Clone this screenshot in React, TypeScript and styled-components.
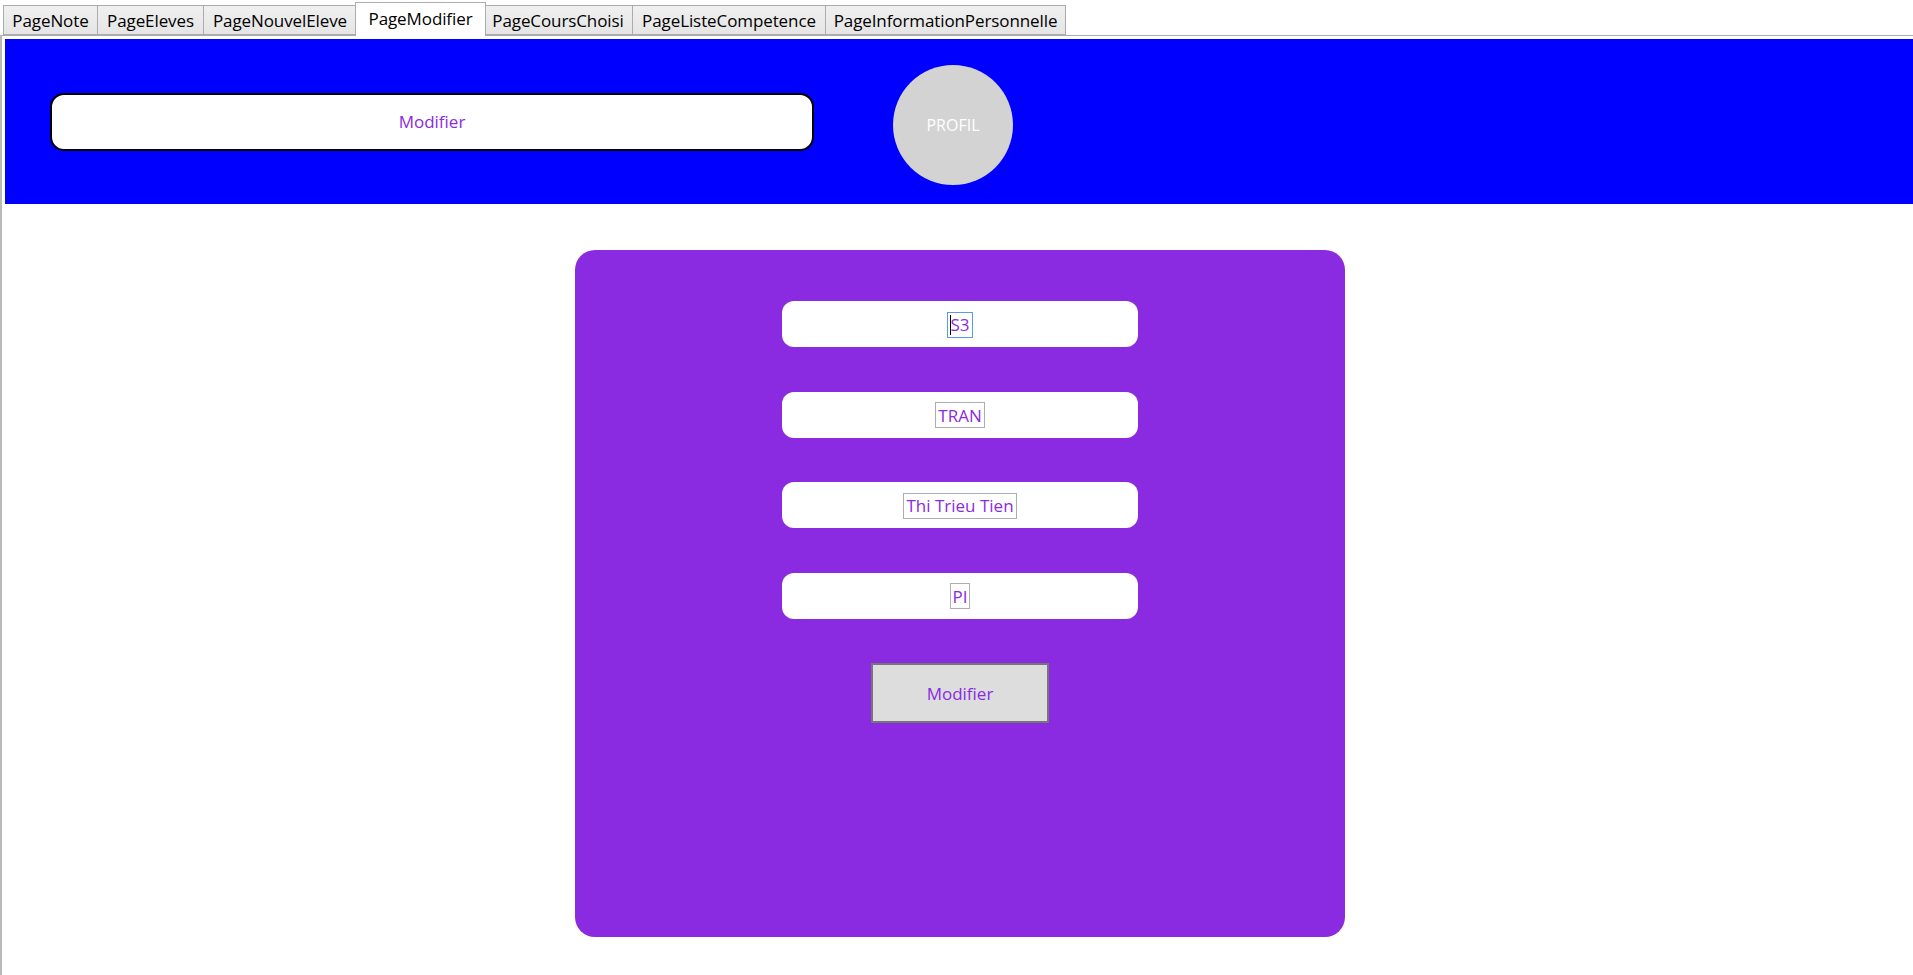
import React from "react";
import styled, { createGlobalStyle } from "styled-components";

const Global = createGlobalStyle`
  html, body { margin: 0; padding: 0; background: #ffffff; }
  body { font-family: "Open Sans", "Noto Sans", sans-serif; }
  #root { min-height: 975px; }
`;

const Page = styled.div`
  display: flex;
  flex-direction: column;
  height: 975px;
  overflow: hidden;
`;

const TabStrip = styled.div`
  display: flex;
  align-items: flex-end;
  height: 35px;
  padding-left: 3px;
  box-sizing: border-box;
  position: relative;
  z-index: 1;
`;

const Tab = styled.div<{ $w: number; $active?: boolean }>`
  width: ${(p) => p.$w}px;
  box-sizing: border-box;
  height: ${(p) => (p.$active ? 34 : 30)}px;
  margin-left: ${(p) => (p.$active ? -2 : 0)}px;
  margin-right: ${(p) => (p.$active ? -2 : 0)}px;
  margin-bottom: ${(p) => (p.$active ? -1 : 0)}px;
  display: flex;
  align-items: center;
  justify-content: center;
  border: 1px solid #acacac;
  border-bottom: ${(p) => (p.$active ? "none" : "1px solid #acacac")};
  border-left-width: ${(p) => (p.$active ? 1 : 0)}px;
  &:first-child { border-left-width: 1px; }
  background: ${(p) => (p.$active ? "#ffffff" : "linear-gradient(#f0f0f0, #e5e5e5)")};
  color: #000000;
  font-size: 17px;
  letter-spacing: -0.1px;
  padding-bottom: ${(p) => (p.$active ? 3 : 0)}px;
  white-space: nowrap;
  position: relative;
  z-index: ${(p) => (p.$active ? 2 : 1)};
`;

const Frame = styled.div`
  flex: 1;
  border-top: 1px solid #acacac;
  border-left: 2px solid #b9b9b9;
  padding: 3px 0 0 3px;
  display: flex;
  flex-direction: column;
`;

const Header = styled.div`
  height: 165px;
  background: #0000ff;
  display: flex;
  align-items: center;
  padding-left: 45px;
  gap: 79px;
`;

const HeaderField = styled.div`
  width: 764px;
  height: 58px;
  box-sizing: border-box;
  background: #ffffff;
  border: 2px solid #000000;
  border-radius: 14px;
  display: flex;
  align-items: center;
  justify-content: center;
  color: #8a2be2;
  font-size: 17px;
`;

const ProfileCircle = styled.div`
  width: 120px;
  height: 120px;
  border-radius: 50%;
  background: #d3d3d3;
  color: #ffffff;
  display: flex;
  align-items: center;
  justify-content: center;
  font-size: 16px;
  margin-top: 6px;
`;

const Body = styled.div`
  display: flex;
  justify-content: center;
  padding-top: 46px;
  padding-left: 2px;
`;

const Panel = styled.div`
  width: 770px;
  height: 687px;
  background: #8a2be2;
  border-radius: 20px;
  display: flex;
  flex-direction: column;
  align-items: center;
  padding-top: 51px;
  gap: 44.5px;
  box-sizing: border-box;
`;

const Field = styled.div`
  width: 356px;
  height: 46px;
  background: #ffffff;
  border-radius: 12px;
  display: flex;
  align-items: center;
  justify-content: center;
`;

const TextBox = styled.div<{ $focused?: boolean }>`
  border: 1px solid ${(p) => (p.$focused ? "#569de5" : "#abadb3")};
  height: 26px;
  box-sizing: border-box;
  padding: 0 2px;
  display: flex;
  align-items: center;
  color: #8a2be2;
  font-size: 17px;
  position: relative;
  margin-top: 1px;
`;

const Caret = styled.span`
  position: absolute;
  left: 2px;
  top: 2px;
  width: 1px;
  height: 20px;
  background: #000000;
`;

const ActionButton = styled.div`
  width: 178px;
  height: 60px;
  box-sizing: border-box;
  background: #dddddd;
  border: 2px solid #767676;
  display: flex;
  align-items: center;
  justify-content: center;
  color: #8a2be2;
  font-size: 17px;
`;

const tabs = [
  { label: "PageNote", w: 95 },
  { label: "PageEleves", w: 106 },
  { label: "PageNouvelEleve", w: 153 },
  { label: "PageModifier", w: 131, active: true },
  { label: "PageCoursChoisi", w: 149 },
  { label: "PageListeCompetence", w: 193 },
  { label: "PageInformationPersonnelle", w: 240 },
];

const values = ["S3", "TRAN", "Thi Trieu Tien", "PI"];

export default function App() {
  return (
    <Page>
      <Global />
      <TabStrip>
        {tabs.map((t) => (
          <Tab key={t.label} $w={t.w} $active={t.active}>
            {t.label}
          </Tab>
        ))}
      </TabStrip>
      <Frame>
        <Header>
          <HeaderField>Modifier</HeaderField>
          <ProfileCircle>PROFIL</ProfileCircle>
        </Header>
        <Body>
          <Panel>
            {values.map((v, i) => (
              <Field key={v}>
                <TextBox $focused={i === 0}>
                  {i === 0 && <Caret />}
                  {v}
                </TextBox>
              </Field>
            ))}
            <ActionButton>Modifier</ActionButton>
          </Panel>
        </Body>
      </Frame>
    </Page>
  );
}
